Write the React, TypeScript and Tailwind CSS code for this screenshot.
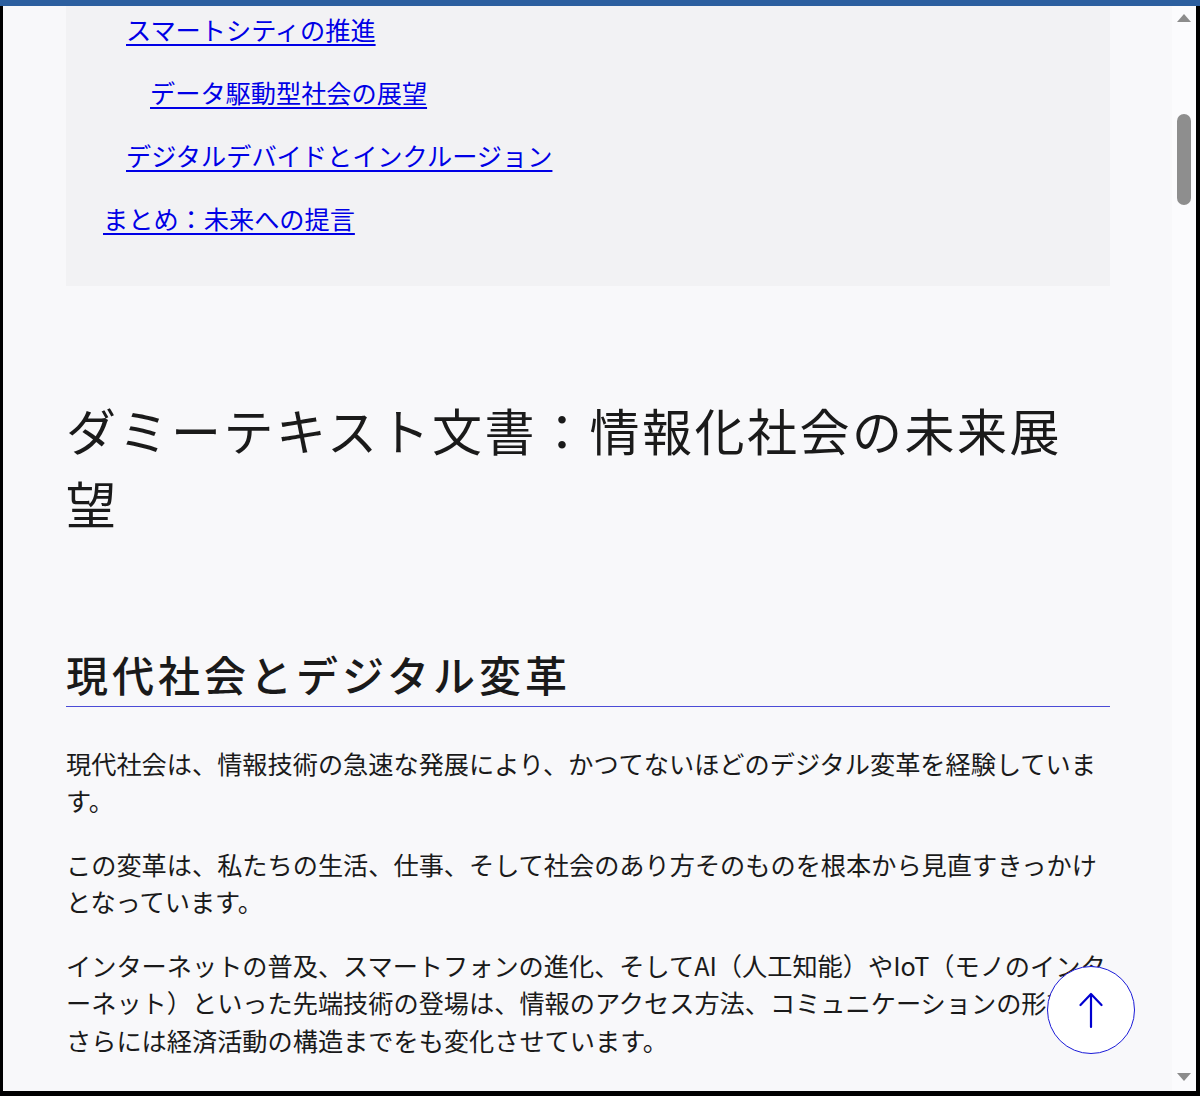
const toc = [
  { label: 'スマートシティの推進', level: 2 },
  { label: 'データ駆動型社会の展望', level: 3 },
  { label: 'デジタルデバイドとインクルージョン', level: 2 },
  { label: 'まとめ：未来への提言', level: 1 },
];

const indent: Record<number, string> = {
  1: 'pl-[37px]',
  2: 'pl-[60px]',
  3: 'pl-[84px]',
};

export default function App() {
  return (
    <div
      className="w-[1200px] h-[1096px] flex flex-col bg-black overflow-hidden"
      style={{ fontFamily: '"Noto Sans CJK JP", "Noto Sans", sans-serif' }}
    >
      {/* window title strip */}
      <div className="h-[6px] bg-[#2c5f9f] shrink-0" />

      <div className="flex flex-1 min-h-0">
        <div className="w-[3px] bg-black shrink-0" />

        {/* page viewport */}
        <div className="relative flex-1 min-w-0 bg-[#f8f8fa] overflow-hidden">
          <div className="pl-[63px] w-[1107px] text-[#1a1a1a]">
            {/* Table of contents (scrolled) */}
            <nav className="w-[1044px] bg-[#f2f2f4] pt-[5px] pb-[48px]">
              <ul className="flex flex-col gap-[25.5px]">
                {toc.map(item => (
                  <li key={item.label} className={`${indent[item.level]} text-[25.2px] leading-[37.5px]`}>
                    <a href="#" className="text-[#0000e6] underline underline-offset-[4px] decoration-[2px]">
                      {item.label}
                    </a>
                  </li>
                ))}
              </ul>
            </nav>

            <h1 className="mt-[107px] text-[50px] leading-[73px] tracking-[0.05em] font-normal">
              ダミーテキスト文書：情報化社会の未来展望
            </h1>

            <h2 className="mt-[105px] text-[42px] leading-[59px] tracking-[0.095em] font-medium border-b border-[#4b4bd6] pb-[3px]">
              現代社会とデジタル変革
            </h2>

            <div className="mt-[38px] flex flex-col gap-[26px] text-[25.2px] leading-[37.5px]">
              <p>現代社会は、情報技術の急速な発展により、かつてないほどのデジタル変革を経験しています。</p>
              <p>この変革は、私たちの生活、仕事、そして社会のあり方そのものを根本から見直すきっかけとなっています。</p>
              <p>
                インターネットの普及、スマートフォンの進化、そしてAI（人工知能）やIoT（モノのインターネット）といった先端技術の登場は、情報のアクセス方法、コミュニケーションの形態、さらには経済活動の構造までをも変化させています。
              </p>
            </div>
          </div>

          {/* back to top */}
          <button className="absolute right-[37px] bottom-[37px] w-[88px] h-[88px] rounded-full bg-white border border-[#1a1ad8] flex items-center justify-center text-[#0000d0]">
            <svg width="40" height="40" viewBox="0 0 40 40" fill="none" stroke="currentColor" strokeWidth="2.2" strokeLinecap="round" strokeLinejoin="round">
              <path d="M20 37 V4 M9.5 15 L20 4 L30.5 15" />
            </svg>
          </button>
        </div>

        {/* scrollbar */}
        <div className="w-[24px] bg-[#fbfbfd] shrink-0 flex flex-col items-center relative">
          <svg width="14" height="8" viewBox="0 0 14 8" className="mt-[8px]">
            <path d="M7 0 L14 8 L0 8 Z" fill="#8c8c8c" />
          </svg>
          <div className="mt-[92px] w-[14px] h-[91px] rounded-full bg-[#8e8e8e]" />
          <svg width="14" height="8" viewBox="0 0 14 8" className="absolute bottom-[10px] left-[5px]">
            <path d="M0 0 L14 0 L7 8 Z" fill="#8c8c8c" />
          </svg>
        </div>

        <div className="w-[4px] bg-black shrink-0" />
      </div>

      <div className="h-[5px] bg-black shrink-0" />
    </div>
  );
}
